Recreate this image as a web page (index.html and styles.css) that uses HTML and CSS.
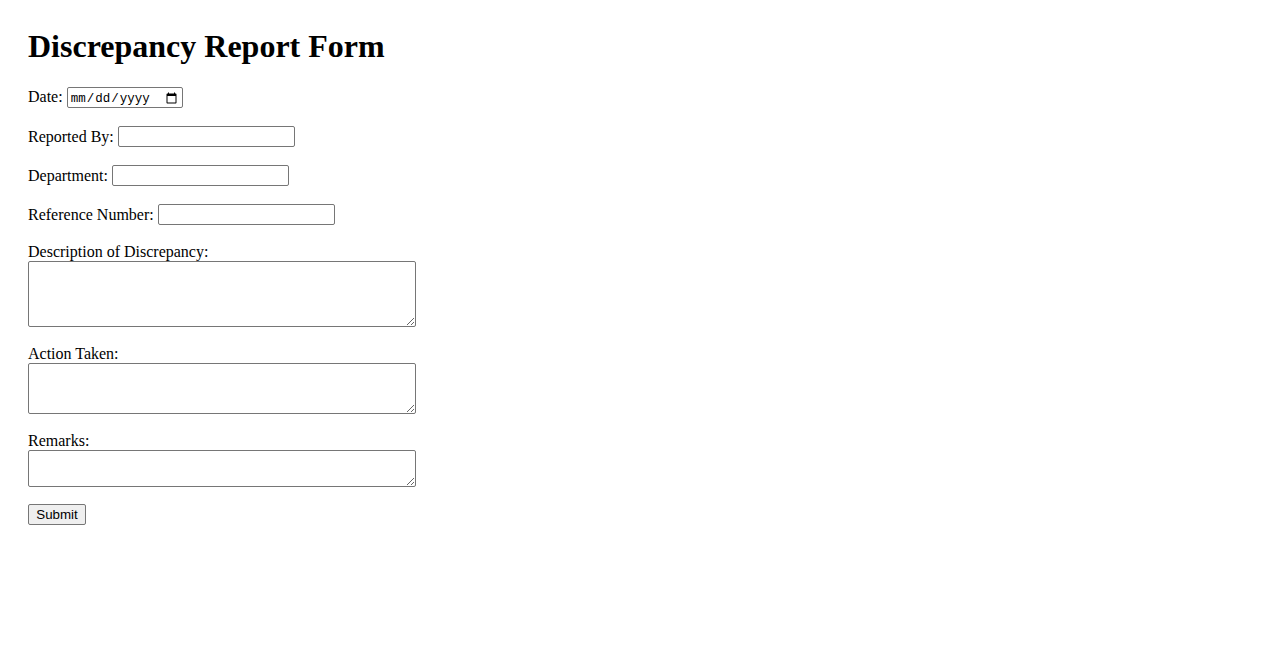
FILE: index.html
```html
<!DOCTYPE html>
<html lang="en">
<head>
<meta charset="utf-8">
<title>Discrepancy Report Form</title>
<link rel="stylesheet" href="styles.css">
</head>
<body>
<div class="page">
  <h1 class="title">Discrepancy Report Form</h1>
  <form class="form">
    <div class="group">
      <label for="date">Date:</label>
      <input class="date-input" type="date" id="date">
    </div>
    <div class="group">
      <label for="reported">Reported By:</label>
      <input class="text-input" type="text" id="reported">
    </div>
    <div class="group">
      <label for="dept">Department:</label>
      <input class="text-input" type="text" id="dept">
    </div>
    <div class="group">
      <label for="ref">Reference Number:</label>
      <input class="text-input" type="text" id="ref">
    </div>
    <div class="group">
      <label class="block-label" for="desc">Description of Discrepancy:</label>
      <textarea class="area area-4" id="desc" rows="4"></textarea>
    </div>
    <div class="group">
      <label class="block-label" for="action">Action Taken:</label>
      <textarea class="area area-3" id="action" rows="3"></textarea>
    </div>
    <div class="group group-last">
      <label class="block-label" for="remarks">Remarks:</label>
      <textarea class="area area-2" id="remarks" rows="2"></textarea>
    </div>
    <div class="group">
      <button class="submit" type="submit">Submit</button>
    </div>
  </form>
</div>
</body>
</html>
```

FILE: styles.css
```css
html, body {
  margin: 0;
  background: #ffffff;
}

body {
  font-family: "Liberation Serif", "Times New Roman", serif;
  font-size: 16px;
  color: #000000;
}

.page {
  padding: 28px;
}

.title {
  font-size: 32px;
  font-weight: bold;
  margin: 0 0 22px 0;
  line-height: 37px;
}

.group {
  margin-bottom: 18px;
}

.group-last {
  margin-bottom: 17px;
}

.block-label {
  display: block;
  line-height: 18px;
}

.text-input {
  box-sizing: border-box;
  width: 177px;
  height: 21px;
  font-family: "Liberation Sans", Arial, sans-serif;
  font-size: 13.333px;
  border: 1px solid #767676;
  border-radius: 2px;
  padding: 2px 2px 0 2px;
}

.date-input {
  box-sizing: border-box;
  width: 116px;
  height: 21px;
  font-family: "Liberation Mono", "Courier New", monospace;
  font-size: 12.5px;
  border: 1px solid #767676;
  border-radius: 2px;
  padding: 2px 2px 0 2px;
}

.area {
  display: block;
  box-sizing: border-box;
  width: 388px;
  font-family: "Liberation Mono", monospace;
  font-size: 13.333px;
  border: 1px solid #767676;
  border-radius: 2px;
  padding: 2px;
  margin: 0;
}

.area-4 { height: 66px; }
.area-3 { height: 51px; }
.area-2 { height: 37px; }

.submit {
  box-sizing: border-box;
  height: 21px;
  width: 58px;
  font-family: "Liberation Sans", Arial, sans-serif;
  font-size: 13.333px;
  background: #efefef;
  border: 1px solid #767676;
  border-radius: 2px;
  padding: 1px 6px;
}
```
